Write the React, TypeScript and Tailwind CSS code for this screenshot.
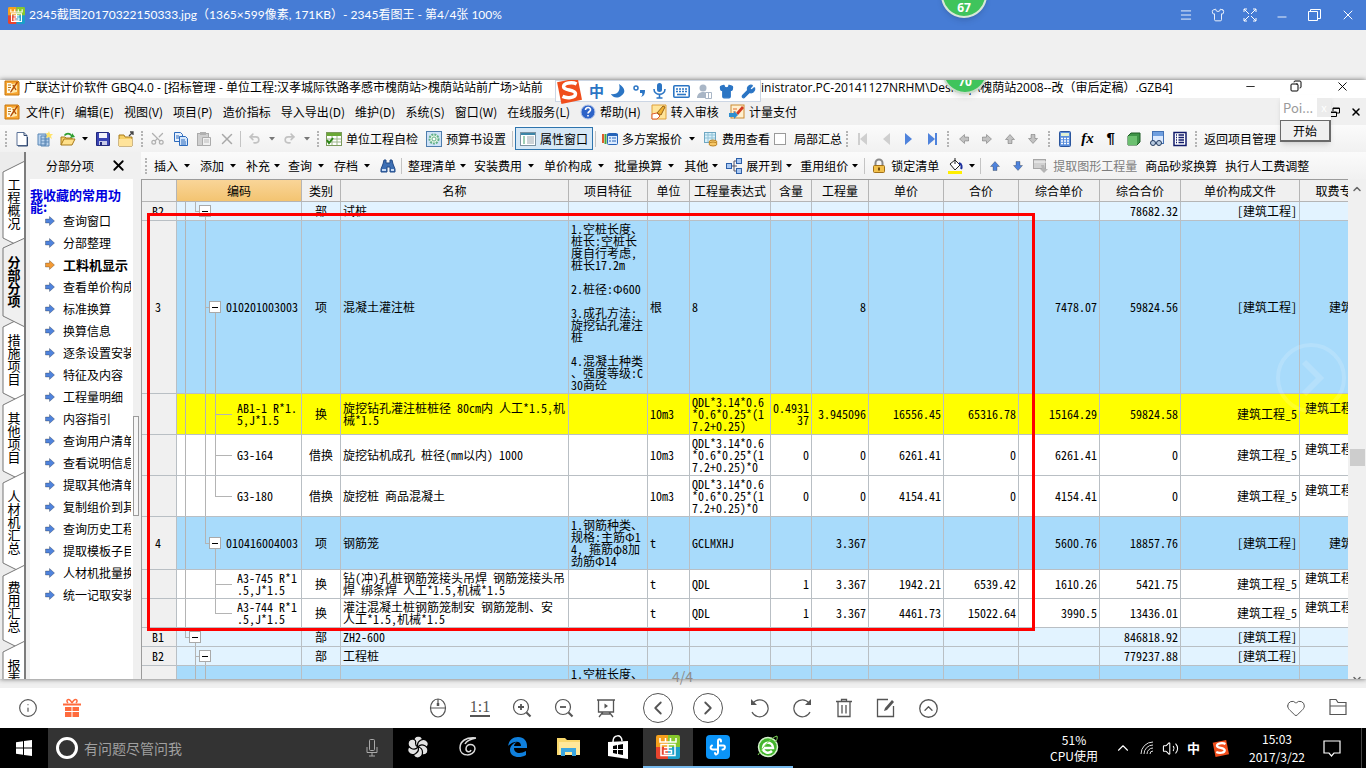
import React from 'react';
import { Menu, Shirt, Minus, Copy, X, Info, ChevronLeft, ChevronRight, CircleChevronUp, Heart, Wrench, ChevronUp, ChevronDown, Volume2, Scissors, Undo2, Redo2 } from 'lucide-react';

const Svg = ({ children }: { children: React.ReactNode }) => (
  <svg width="16" height="16" viewBox="0 0 16 16" fill="none" className="shrink-0">{children}</svg>
);

const GbqIcon = () => (
  <Svg>
    <path d="M1 1h13l1 1v13H1z" fill="#f7a531" stroke="#c8780f" />
    <path d="M3 3h4l1 1v9H3z" fill="#fffbe8" />
    <path d="M8 4l5-1v9l-5 1z" fill="#ffe9a8" />
    <path d="M4 5h3M4 7.500h3M4 10h2" stroke="#b3701a" />
    <path d="M13.500 2L8 10l-1.500 2.500M9 5l3 5" stroke="#b24d06" strokeWidth="1.400" />
  </Svg>
);

const PageIcon = () => (
  <Svg><path d="M3 1.500h7l3 3v10H3z" fill="#fff" stroke="#5a7197" /><path d="M10 1.500v3h3M13.500 6v9H4" stroke="#31486f" /></Svg>
);

const SheetsIcon = () => (
  <Svg><path d="M1 3h8v11H1zM4 5h8v10H4z" fill="#b9d3ee" stroke="#5b87b5" /><path d="M4 8h8M4 11h8M8 5v10" stroke="#5b87b5" /><path d="M12 0l1 3 3 0-2 2 1 3-3-2-3 1 1-3-1-2h2z" fill="#ffe36b" /></Svg>
);

const OpenIcon = () => (
  <Svg><path d="M1 14V6h4l1 1h6v2" fill="#f6d067" stroke="#a87a1a" /><path d="M1 14l3-6h11l-3 6z" fill="#ffe08a" stroke="#a87a1a" /><path d="M4 4c2-3 6-3 8 0V2l3 4-5 1 1-2c-2-2-4-2-6 0z" fill="#2f9e31" /></Svg>
);

const SaveIcon = () => (
  <Svg><path d="M1.500 1.500h12l1 1v12h-13z" fill="#3a44b4" stroke="#22297d" /><path d="M4 2h8v5H4z" fill="#f4f4fb" /><path d="M4 10h8v4H4z" fill="#c8cbe8" /><path d="M5 11h2v3H5z" fill="#22297d" /></Svg>
);

const FolderOutIcon = () => (
  <Svg><path d="M1 4h5l1 2h7v9H1z" fill="#f6d067" stroke="#a87a1a" /><path d="M1 8h13v7H1z" fill="#ffe39a" /><path d="M11 5l4-4M12 1h3v3" stroke="#444" strokeWidth="1.300" /></Svg>
);

const CopyDocsIcon = () => (
  <Svg><path d="M1.500 1.500h6l2 2v7h-8z" fill="#e8f1fd" stroke="#2d6bbd" /><path d="M6.500 5.500h6l2 2v7h-8z" fill="#d4e6fb" stroke="#2d6bbd" /><path d="M3 5h3M3 7h3M8 9h4M8 11h5M8 13h5" stroke="#2d6bbd" /></Svg>
);

const PasteIcon = () => (
  <Svg><rect x="1.500" y="2.500" width="11" height="12" fill="#cfcfcf" stroke="#ababab" /><rect x="4" y="1" width="6" height="3" fill="#b0b0b0" /><path d="M6.500 6.500h8v8h-8z" fill="#f0f0f0" stroke="#ababab" /><path d="M8 9h5M8 11h5" stroke="#bbb" /></Svg>
);

const CheckTableIcon = () => (
  <Svg><rect x=".5" y="1.500" width="15" height="13" fill="#fff" stroke="#7c9a5c" /><path d="M1 2h14v3H1z" fill="#6aa836" /><path d="M1 8h14M1 11h14M6 5v9M11 5v9" stroke="#9db58a" /><path d="M1 9l2 3 4-5" stroke="#2d8618" strokeWidth="2" /></Svg>
);

const GearIcon = () => (
  <Svg><rect x=".5" y=".5" width="15" height="15" fill="#cfe3f7" stroke="#4e7dad" /><circle cx="8" cy="8" r="4.500" fill="#e7f6e4" stroke="#62b08a" strokeWidth="2" strokeDasharray="2 1" /><circle cx="8" cy="8" r="2" fill="#fff" stroke="#62b08a" /></Svg>
);

const ListWindowIcon = () => (
  <Svg><rect x=".5" y="1.500" width="15" height="13" fill="#fff" stroke="#7c93a3" /><path d="M1 2h14v2H1z" fill="#3c86a8" /><path d="M3 6h2M3 8h2M3 10h2M3 12h2" stroke="#3aa06a" /><path d="M7 6h7M7 8h7M7 10h7M7 12h7" stroke="#9aa7b0" /></Svg>
);

const StackIcon = () => (
  <Svg><path d="M1 3v9" stroke="#e05a2b" strokeWidth="2" /><path d="M3.500 3v10" stroke="#4aa53c" strokeWidth="2" /><rect x="5.500" y="2.500" width="10" height="11" rx="1" fill="#dcebff" stroke="#2764b8" /><path d="M5 3h11v2H5z" fill="#2764b8" /><path d="M7 7h2M10 7h4M7 10h2M10 10h4" stroke="#2764b8" /></Svg>
);

const CostIcon = () => (
  <Svg><rect x="2.500" y="1.500" width="11" height="10" fill="#d9f0fa" stroke="#6fa7c2" /><path d="M3 4h10M3 7h10M6 2v9M10 2v9" stroke="#8fc2d8" /><ellipse cx="11" cy="11" rx="4" ry="2" fill="#f5c666" stroke="#bd8526" /><ellipse cx="11" cy="13" rx="4" ry="2" fill="#f5c666" stroke="#bd8526" /></Svg>
);

const HelpIcon = () => (
  <Svg><circle cx="8" cy="8" r="7" fill="#2d63c8" stroke="#b8c8e8" /><path d="M5.500 6c0-3.500 5.500-3 5 0 0 1.500-2.500 1.500-2.500 3.500M8 11v1.500" stroke="#fff" strokeWidth="1.600" /></Svg>
);

const AuditIcon = () => (
  <Svg><path d="M1 1h14v14H1z" fill="#ffe59a" stroke="#dfa03a" /><path d="M1 10l5-1 3 3-3 3H1z" fill="#fff" stroke="#e05a2b" /><path d="M6 9l6-7 2 1-4 8z" fill="#f2b233" stroke="#97631a" /></Svg>
);

const PayIcon = () => (
  <Svg><rect x="2" y="1" width="13" height="13" fill="#fff0cf" stroke="#cc8a30" /><path d="M4 5h4M4 8h3" stroke="#e06a2b" /><path d="M7 9l6-7 2 2-6 7z" fill="#d43a22" /><path d="M0 9h5V7l4 4-4 4v-2H0z" fill="#2f8fd0" /></Svg>
);

const BinocularsIcon = () => (
  <Svg><path d="M4 2h2v3h4V2h2l1 4 2 5v3h-5V9H7v5H1v-3l2-5z" fill="#3d6fb4" stroke="#234a86" /><path d="M2 12h4M11 12h3" stroke="#c7dbf5" strokeWidth="2" /></Svg>
);

const ExpandTreeIcon = () => (
  <Svg><path d="M5 8h3M8 3v10M8 3h3M8 13h3M8 8h3" stroke="#556" /><rect x=".5" y="5.500" width="5" height="5" fill="#a9c8f2" stroke="#2d5fa8" /><rect x="10.500" y=".5" width="5" height="5" fill="#a9c8f2" stroke="#2d5fa8" /><rect x="10.500" y="10.500" width="5" height="5" fill="#a9c8f2" stroke="#2d5fa8" /></Svg>
);

const LockIcon = () => (
  <Svg><path d="M4.500 8V5a3.500 3.500 0 017 0v3" stroke="#8a8a8a" strokeWidth="2" /><rect x="2.500" y="7.500" width="11" height="7" rx="1" fill="#f2c14c" stroke="#a0701a" /><path d="M8 9.500v3" stroke="#7a4f08" strokeWidth="2" /></Svg>
);

const BucketIcon = () => (
  <Svg><path d="M3 6l5-4 5 5-5 5z" fill="#fff" stroke="#222" /><path d="M8 6V0" stroke="#222" /><path d="M12 5c3 1 3 4 2 6" stroke="#1b2f9c" strokeWidth="2" /><path d="M1 13h14v3H1z" fill="#ffef00" /></Svg>
);

const ExtractIcon = () => (
  <Svg><rect x=".5" y="1.500" width="12" height="9" fill="#d0d0d0" stroke="#a6a6a6" /><path d="M1 4h12" stroke="#f5f5f5" /><path d="M8 7h3l1 4h3l-4 4-4-4h2z" fill="#b5b5b5" /></Svg>
);

const ArrowIcon = ({ dir, color }: { dir: 'left' | 'right' | 'up' | 'down', color: string }) => {
  const turns = { right: 0, down: 90, left: 180, up: 270 };
  return (
    <Svg>
      <g transform={`rotate(${turns[dir]} 8 8)`}>
        <path d="M3.500 6h4V3.500L12.500 8l-5 4.500V10h-4z" fill={color} stroke="#00000040" />
      </g>
    </Svg>
  );
};

const PlayIcon = ({ flip, bar, color }: { flip?: boolean, bar?: boolean, color: string }) => (
  <Svg>
    <g transform={flip ? 'rotate(180 8 8)' : undefined}>
      <path d="M4 2l7 6-7 6z" fill={color} />
      {bar && <path d="M12 2v12" stroke={color} strokeWidth="2" />}
    </g>
  </Svg>
);

const CalcIcon = () => (
  <Svg><rect x="2.500" y=".5" width="11" height="15" rx="1" fill="#5b8fdc" stroke="#2a559c" /><path d="M4 2h8v3H4z" fill="#e2f0d2" /><path d="M4 7.500h8M4 10h8M4 12.500h8" stroke="#fff" strokeWidth="1.500" strokeDasharray="2 1" /></Svg>
);

const CubeIcon = () => (
  <Svg><path d="M2 5l3-3h9v9l-3 3H2z" fill="#3f9448" stroke="#1f5c27" /><path d="M2 5h9v9H2z" fill="#6cc070" /></Svg>
);

const FindDocIcon = () => (
  <Svg><rect x="3.500" y=".5" width="11" height="12" fill="#dceaff" stroke="#4472b4" /><path d="M4 1h10v4H4z" fill="#6f9fe0" /><circle cx="4" cy="12" r="2.500" fill="#b9cbe0" stroke="#223a5e" /><circle cx="10" cy="12" r="2.500" fill="#b9cbe0" stroke="#223a5e" /></Svg>
);

const ReportIcon = () => (
  <Svg><rect x="2" y="1.500" width="12" height="13" fill="#fff" stroke="#111a6a" strokeWidth="1.500" /><path d="M4 4h1M4 6.500h1M4 9h1M4 11.500h1M6.500 4H12M6.500 6.500H12M6.500 9H12M6.500 11.500H12" stroke="#111a6a" strokeWidth="1.300" /></Svg>
);

const ViewerLogo = ({ size }: { size: number }) => (
  <svg width={size} height={size} viewBox="0 0 24 24" fill="none" className="shrink-0">
    <path d="M2 0h10v12H0V2a2 2 0 012-2z" fill="#f5a01c" />
    <path d="M12 0h10a2 2 0 012 2v10H12z" fill="#86c82c" />
    <path d="M0 12h12v12H2a2 2 0 01-2-2z" fill="#e8442e" />
    <path d="M12 12h12v10a2 2 0 01-2 2H12z" fill="#1b9fc9" />
    <path d="M4 3v4h16V3M9.500 3v4M14.500 3v4M5 9.500h14v11H5zM8 12.500h8M12 10v5M8.500 15.500h7v3h-7z" stroke="#fff" strokeWidth="1.500" />
  </svg>
);

const SogouLogo = ({ size }: { size: number }) => (
  <svg width={size} height={size} viewBox="0 0 24 24" fill="none" className="shrink-0">
    <path d="M1 4l19-4 4 20-19 4z" fill="#f04e1c" />
    <path d="M19 5.500c-4-2-12-1-12 2.500 0 4 11 2 11 6.500 0 4-8 4.500-12 2.500" stroke="#fff" strokeWidth="3.200" />
  </svg>
);

const Caret = ({ color = '#000' }: { color?: string }) => (
  <svg width="6" height="4" viewBox="0 0 6 4"><path d="M0 0h6L3 3.500z" fill={color} /></svg>
);

const Grip = () => (
  <span className="flex w-[9px] shrink-0 justify-center"><span className="h-4 border-l-2 border-dotted border-[#b4b4b4]" /></span>
);

const Sep = () => (
  <span className="flex w-[5px] shrink-0 justify-center"><span className="h-4 w-px bg-[#c4c4c4]" /></span>
);

const IconTool = ({ label, children }: { label: string, children: React.ReactNode }) => (
  <button aria-label={label} className="flex h-6 w-[23px] shrink-0 items-center justify-center">{children}</button>
);

const CaretTool = ({ label, color }: { label: string, color?: string }) => (
  <button aria-label={label} className="flex h-6 w-3 shrink-0 items-center justify-center"><Caret color={color} /></button>
);

const TextTool = ({ icon, children, className = '' }: { icon?: React.ReactNode, children: React.ReactNode, className?: string }) => (
  <button className={`flex h-[23px] shrink-0 items-center gap-1 px-1 ${className}`}>{icon}{children}</button>
);

const DropTool = ({ icon, tight, children }: { icon?: React.ReactNode, tight?: boolean, children: React.ReactNode }) => (
  <button className="flex h-6 shrink-0 items-center pl-1">
    {icon && <span className="mr-1">{icon}</span>}
    {children}
    <span className={`flex justify-center ${tight ? 'w-[14px]' : 'w-[18px]'}`}><Caret /></span>
  </button>
);

const ViewerTitle = () => (
  <header className="relative flex h-[30px] shrink-0 items-center bg-[#467cd5] pl-2 text-white">
    <ViewerLogo size={17} />
    <h1 className="ml-1 flex-1 whitespace-nowrap font-['Lato','Noto_Sans_CJK_SC',sans-serif] text-[12px]">2345截图20170322150333.jpg（1365×599像素, 171KB）- 2345看图王 - 第4/4张 100%</h1>
    <button aria-label="菜单" className="flex w-8 justify-center"><Menu size={14} strokeWidth={1.500} /></button>
    <button aria-label="皮肤" className="flex w-8 justify-center"><Shirt size={14} strokeWidth={1.500} /></button>
    <button aria-label="全屏" className="flex w-8 justify-center">
      <svg width="14" height="14" viewBox="0 0 14 14" fill="none" stroke="#fff"><path d="M1 4V1h3M10 1h3v3M13 10v3h-3M4 13H1v-3M1 1l5 5M13 1L8 6M13 13L8 8M1 13l5-5" /></svg>
    </button>
    <button aria-label="最小化" className="flex w-8 justify-center pt-1"><Minus size={14} strokeWidth={1.500} /></button>
    <button aria-label="还原" className="flex w-8 justify-center">
      <svg width="13" height="12" viewBox="0 0 13 12" fill="none" stroke="#fff"><path d="M.5 2.500h9v9h-9zM2.500 2.500v-2h10v9h-3" /></svg>
    </button>
    <button aria-label="关闭" className="flex w-9 justify-center"><X size={16} strokeWidth={1.500} /></button>
    <div className="absolute -top-7 left-[941px] flex size-[46px] items-end justify-center rounded-full border-2 border-[#d8e8d8] bg-[#3fc45c] pb-0.5 font-['Open_Sans',sans-serif] text-[12px] font-bold leading-3 text-white shadow-md">67</div>
  </header>
);

const ImeBar = () => (
  <div className="absolute left-[555px] top-0 flex h-[22px] w-[206px] items-center justify-between border border-[#ccd6e4] bg-white pr-1 text-[#2b75c4]">
    <SogouLogo size={26} />
    <span className="text-[15px] font-bold">中</span>
    <svg width="14" height="14" viewBox="0 0 14 14"><path d="M8 0c5 3 8 8 2 12-4 3-9 1-10-2 6 1 10-3 8-10z" fill="#2b75c4" /></svg>
    <svg width="14" height="14" viewBox="0 0 14 14" fill="none"><circle cx="4" cy="4" r="2" stroke="#2b75c4" strokeWidth="1.500" /><path d="M8 6h5c0 4-1 6-4 7 1-1 2-3 1-4H8z" fill="#2b75c4" /></svg>
    <svg width="13" height="16" viewBox="0 0 13 16" fill="none"><rect x="4" y="0" width="5" height="9" rx="2.500" fill="#2b75c4" /><path d="M1 6c0 7 11 7 11 0M6.500 11v4M3.500 15h6" stroke="#2b75c4" strokeWidth="1.600" /></svg>
    <svg width="17" height="13" viewBox="0 0 17 13" fill="none"><rect x=".8" y=".8" width="15.400" height="11.400" rx="1" stroke="#2b75c4" strokeWidth="1.600" /><path d="M3 4h11M3 6.500h11" stroke="#2b75c4" strokeWidth="1.600" strokeDasharray="2 1" /><path d="M4 9.500h9" stroke="#2b75c4" strokeWidth="1.600" /></svg>
    <svg width="15" height="15" viewBox="0 0 15 15"><circle cx="6" cy="4" r="3.500" fill="#a9b6c6" /><path d="M0 14c0-8 12-8 12 0z" fill="#a9b6c6" /><path d="M8.500 8.500h6v6h-6z" fill="#fff" stroke="#a9b6c6" /><path d="M11.500 9v5" stroke="#a9b6c6" /></svg>
    <Shirt size={15} fill="#2b75c4" />
    <Wrench size={15} fill="#2b75c4" />
  </div>
);

const AppTitle = () => (
  <div className="flex h-[18px] shrink-0 items-start overflow-hidden bg-white pl-1 font-['Open_Sans','Noto_Sans_CJK_SC',sans-serif] leading-4">
    <GbqIcon />
    <span className="ml-1 w-[532px] shrink-0 overflow-hidden whitespace-nowrap">广联达计价软件 GBQ4.0 - [招标管理 - 单位工程:汉孝城际铁路孝感市槐荫站&gt;槐荫站站前广场&gt;站前</span>
    <span className="flex-1 whitespace-nowrap pl-[205px]">inistrator.PC-20141127NRHM\Desktop\槐荫站2008--改（审后定稿）.GZB4]</span>
    <button aria-label="最小化窗口" className="flex h-3 w-[45px] items-center justify-center"><Minus size={13} strokeWidth={1.500} /></button>
    <button aria-label="还原窗口" className="flex h-3 w-[45px] items-center justify-center"><Copy size={12} strokeWidth={2} className="-scale-x-100" /></button>
    <button aria-label="关闭窗口" className="flex h-3 w-12 items-center justify-center"><X size={15} strokeWidth={1.500} /></button>
  </div>
);

const menus = ['文件(F)', '编辑(E)', '视图(V)', '项目(P)', '造价指标', '导入导出(D)', '维护(D)', '系统(S)', '窗口(W)', '在线服务(L)'];

const MenuBar = () => (
  <nav className="flex h-[27px] shrink-0 items-center gap-[10px] whitespace-nowrap bg-[#f0f0f0] px-1">
    <span className="flex items-center gap-1.5"><GbqIcon /><button>{menus[0]}</button></span>
    {menus.slice(1).map(m => <button key={m}>{m}</button>)}
    <button className="flex items-center gap-1"><HelpIcon />帮助(H)</button>
    <button className="flex items-center gap-1"><AuditIcon />转入审核</button>
    <button className="flex items-center gap-1"><PayIcon />计量支付</button>
    <span className="flex-1" />
    <button aria-label="还原文档">
      <svg width="10" height="10" viewBox="0 0 10 10" fill="none" stroke="#000"><path d="M.5 5h6v4.500h-6zM3 4V1h6.500v5H7M3 1.500h7M0 5.500h7" /></svg>
    </button>
    <button aria-label="关闭文档"><X size={12} strokeWidth={3} /></button>
  </nav>
);

const grey = '#c2c2c2';
const blue = '#4f83dc';

const MainToolbar = () => (
  <div className="flex h-[27px] shrink-0 items-center whitespace-nowrap bg-linear-to-b from-[#fbfbfb] to-[#f1f1f1] pl-px">
    <Grip />
    <IconTool label="新建"><PageIcon /></IconTool>
    <IconTool label="新建项目"><SheetsIcon /></IconTool>
    <IconTool label="打开"><OpenIcon /></IconTool>
    <CaretTool label="最近文件" />
    <IconTool label="保存"><SaveIcon /></IconTool>
    <IconTool label="另存"><FolderOutIcon /></IconTool>
    <Grip />
    <IconTool label="剪切"><Scissors size={15} color="#b0b0b0" className="-rotate-90" /></IconTool>
    <IconTool label="复制"><CopyDocsIcon /></IconTool>
    <IconTool label="粘贴"><PasteIcon /></IconTool>
    <IconTool label="删除"><X size={18} color="#a8a8a8" /></IconTool>
    <Sep />
    <IconTool label="撤销"><Undo2 size={13} color={grey} strokeWidth={3} /></IconTool>
    <CaretTool label="撤销列表" color="#777" />
    <IconTool label="重做"><Redo2 size={13} color={grey} strokeWidth={3} /></IconTool>
    <CaretTool label="重做列表" color="#777" />
    <Grip />
    <TextTool icon={<CheckTableIcon />}>单位工程自检</TextTool>
    <TextTool icon={<GearIcon />}>预算书设置</TextTool>
    <Sep />
    <TextTool icon={<ListWindowIcon />} className="border border-[#2e74ad] bg-[#d6e8f6]">属性窗口</TextTool>
    <Sep />
    <TextTool icon={<StackIcon />}>多方案报价</TextTool>
    <CaretTool label="报价方案" />
    <TextTool icon={<CostIcon />}>费用查看</TextTool>
    <label className="flex shrink-0 items-center gap-2"><input type="checkbox" className="size-3 appearance-none border border-[#9a9a9a] bg-white" />局部汇总</label>
    <Grip />
    <IconTool label="首条"><PlayIcon flip bar color="#cfcfcf" /></IconTool>
    <IconTool label="上一条"><PlayIcon flip color="#cfcfcf" /></IconTool>
    <IconTool label="下一条"><PlayIcon color={blue} /></IconTool>
    <IconTool label="末条"><PlayIcon bar color={blue} /></IconTool>
    <Grip />
    <IconTool label="左移"><ArrowIcon dir="left" color={grey} /></IconTool>
    <IconTool label="右移"><ArrowIcon dir="right" color={grey} /></IconTool>
    <IconTool label="上移"><ArrowIcon dir="up" color={grey} /></IconTool>
    <IconTool label="下移"><ArrowIcon dir="down" color={grey} /></IconTool>
    <Grip />
    <IconTool label="计算器"><CalcIcon /></IconTool>
    <IconTool label="函数"><span className="font-['Liberation_Serif',serif] text-[15px] font-bold italic">fx</span></IconTool>
    <IconTool label="段落"><span className="font-['Liberation_Sans',sans-serif] text-[15px] font-bold">¶</span></IconTool>
    <IconTool label="图元"><CubeIcon /></IconTool>
    <IconTool label="查找文档"><FindDocIcon /></IconTool>
    <IconTool label="报表预览"><ReportIcon /></IconTool>
    <Grip />
    <TextTool>返回项目管理</TextTool>
  </div>
);

const EditToolbar = () => (
  <div className="flex h-[27px] shrink-0 items-center whitespace-nowrap bg-linear-to-b from-[#fbfbfb] to-[#f1f1f1]">
    <Grip />
    <DropTool>插入</DropTool>
    <DropTool>添加</DropTool>
    <DropTool tight>补充</DropTool>
    <DropTool>查询</DropTool>
    <DropTool>存档</DropTool>
    <IconTool label="查找"><BinocularsIcon /></IconTool>
    <Sep />
    <DropTool tight>整理清单</DropTool>
    <DropTool>安装费用</DropTool>
    <DropTool>单价构成</DropTool>
    <DropTool>批量换算</DropTool>
    <DropTool tight>其他</DropTool>
    <DropTool tight icon={<ExpandTreeIcon />}>展开到</DropTool>
    <DropTool tight>重用组价</DropTool>
    <Sep />
    <TextTool icon={<LockIcon />}>锁定清单</TextTool>
    <IconTool label="填充颜色"><BucketIcon /></IconTool>
    <CaretTool label="更多颜色" />
    <Sep />
    <IconTool label="上移一行"><ArrowIcon dir="up" color={blue} /></IconTool>
    <IconTool label="下移一行"><ArrowIcon dir="down" color={blue} /></IconTool>
    <TextTool icon={<ExtractIcon />} className="text-[#7d7d7d]">提取图形工程量</TextTool>
    <TextTool>商品砂浆换算</TextTool>
    <TextTool>执行人工费调整</TextTool>
  </div>
);

const stages = ['工程概况', '分部分项', '措施项目', '其他项目', '人材机汇总', '费用汇总', '报表'];

const StageTabs = () => (
  <div className="relative w-[26px] shrink-0 overflow-hidden border-r-2 border-[#7d7d7d] bg-[#ececec] pt-3">
    <svg width="25" height="530" viewBox="0 0 25 530" className="absolute left-0 top-0">
      {[[20, 86], [175, 241], [253, 319], [331, 411], [424, 488], [500, 600]].map(([a, b]) => (
        <path key={a} d={`M25 ${a - 11}L3 ${a}V${b}L25 ${b + 11}`} fill="#fff" stroke="#777" />
      ))}
      <path d="M25 86L3 96V164L25 175" fill="#f0f0f0" stroke="#777" />
    </svg>
    <div className="relative flex flex-col">
      {stages.map(s => (
        <button
          key={s}
          className={`flex items-center justify-center pl-1 ${s.length === 5 ? 'h-[91px]' : s.length === 2 ? 'h-[52px]' : 'h-[78px]'} ${s === '分部分项' ? 'font-bold' : ''}`}
        >
          <span className="w-[13px] break-all text-[13px] leading-[13px]">{s}</span>
        </button>
      ))}
    </div>
  </div>
);

const favourites = ['查询窗口', '分部整理', '工料机显示', '查看单价构成', '标准换算', '换算信息', '逐条设置安装费用', '特征及内容', '工程量明细', '内容指引', '查询用户清单', '查看说明信息', '提取其他清单', '复制组价到其他', '查询历史工程', '提取模板子目', '人材机批量换算', '统一记取安装费用'];

const SidePanel = () => (
  <aside className="flex w-[107px] shrink-0 flex-col bg-[#f0f0f0] pl-1">
    <div className="flex h-[27px] shrink-0 items-center justify-between pl-4 pr-1.5">
      <h2>分部分项</h2>
      <button aria-label="关闭面板"><X size={17} strokeWidth={2.500} /></button>
    </div>
    <div className="flex-1 overflow-hidden bg-white">
      <h3 className="h-[31px] pt-[10px] text-[13px] font-bold leading-3 text-[#0000e0]">我收藏的常用功能:</h3>
      <ul className="mr-0.5 overflow-hidden">
        {favourites.map(f => (
          <li key={f}>
            <a href="#" className={`flex h-[22px] items-center gap-[5px] whitespace-nowrap pl-3 ${f === '工料机显示' ? 'text-[13px] font-bold' : ''}`}>
              <ArrowIcon dir="right" color={f === '工料机显示' ? '#f39a35' : blue} />{f}
            </a>
          </li>
        ))}
      </ul>
    </div>
  </aside>
);

type Tone = 'light' | 'blue' | 'yellow' | 'white';

interface BillRow {
  no?: string;
  tone: Tone;
  height: string;
  guides: number[];
  end?: number;
  box?: 18 | 28 | 38;
  code?: string;
  kind: string;
  name?: string;
  feature?: string;
  unit?: string;
  expr?: string;
  rate?: string;
  qty?: string;
  price?: string;
  total?: string;
  unitPrice?: string;
  sum?: string;
  file: string;
  major?: string;
}

const pileFeature = '1.空桩长度、\n桩长:空桩长\n度自行考虑,\n桩长17.2m\n\n2.桩径:Φ600\n\n3.成孔方法:\n旋挖钻孔灌注\n桩\n\n4.混凝土种类\n、强度等级:C\n30商砼';
const steelFeature = '1.钢筋种类、\n规格:主筋Φ1\n4, 箍筋φ8加\n劲筋Φ14';

const rows: BillRow[] = [
  { no: 'B2', tone: 'light', height: 'h-[19px]', guides: [8], end: 18, box: 28, kind: '部', name: '试桩', sum: '78682.32', file: '[建筑工程]' },
  { no: '3', tone: 'blue', height: 'h-[173px]', guides: [8, 28], box: 38, code: '010201003003', kind: '项', name: '混凝土灌注桩', feature: pileFeature, unit: '根', expr: '8', qty: '8', unitPrice: '7478.07', sum: '59824.56', file: '[建筑工程]', major: '建筑工程' },
  { tone: 'yellow', height: 'h-[41px]', guides: [8, 28, 38], code: 'AB1-1 R*1.\n5,J*1.5', kind: '换', name: '旋挖钻孔灌注桩桩径 80cm内 人工*1.5,机\n械*1.5', unit: '10m3', expr: 'QDL*3.14*0.6\n*0.6*0.25*(1\n7.2+0.25)', rate: '0.4931\n37', qty: '3.945096', price: '16556.45', total: '65316.78', unitPrice: '15164.29', sum: '59824.58', file: '建筑工程_5', major: '建筑工程土建\n类' },
  { tone: 'white', height: 'h-[41px]', guides: [8, 28, 38], code: 'G3-164', kind: '借换', name: '旋挖钻机成孔 桩径(mm以内) 1000', unit: '10m3', expr: 'QDL*3.14*0.6\n*0.6*0.25*(1\n7.2+0.25)*0', rate: '0', qty: '0', price: '6261.41', total: '0', unitPrice: '6261.41', sum: '0', file: '建筑工程_5', major: '建筑工程土建\n类' },
  { tone: 'white', height: 'h-[41px]', guides: [8, 28], end: 38, code: 'G3-180', kind: '借换', name: '旋挖桩 商品混凝土', unit: '10m3', expr: 'QDL*3.14*0.6\n*0.6*0.25*(1\n7.2+0.25)*0', rate: '0', qty: '0', price: '4154.41', total: '0', unitPrice: '4154.41', sum: '0', file: '建筑工程_5', major: '建筑工程土建\n类' },
  { no: '4', tone: 'blue', height: 'h-[53px]', guides: [8], end: 28, box: 38, code: '010416004003', kind: '项', name: '钢筋笼', feature: steelFeature, unit: 't', expr: 'GCLMXHJ', qty: '3.367', unitPrice: '5600.76', sum: '18857.76', file: '[建筑工程]', major: '建筑工程' },
  { tone: 'white', height: 'h-[29px]', guides: [8, 38], code: 'A3-745 R*1\n.5,J*1.5', kind: '换', name: '钻(冲)孔桩钢筋笼接头吊焊 钢筋笼接头吊\n焊 绑条焊 人工*1.5,机械*1.5', unit: 't', expr: 'QDL', rate: '1', qty: '3.367', price: '1942.21', total: '6539.42', unitPrice: '1610.26', sum: '5421.75', file: '建筑工程_5', major: '建筑工程土建\n类' },
  { tone: 'white', height: 'h-[29px]', guides: [8], end: 38, code: 'A3-744 R*1\n.5,J*1.5', kind: '换', name: '灌注混凝土桩钢筋笼制安 钢筋笼制、安\n人工*1.5,机械*1.5', unit: 't', expr: 'QDL', rate: '1', qty: '3.367', price: '4461.73', total: '15022.64', unitPrice: '3990.5', sum: '13436.01', file: '建筑工程_5', major: '建筑工程土建\n类' },
  { no: 'B1', tone: 'light', height: 'h-[19px]', guides: [], end: 8, box: 18, kind: '部', name: 'ZH2-600', sum: '846818.92', file: '[建筑工程]' },
  { no: 'B2', tone: 'light', height: 'h-[19px]', guides: [18], box: 28, kind: '部', name: '工程桩', sum: '779237.88', file: '[建筑工程]' },
  { no: '5', tone: 'blue', height: 'h-[173px]', guides: [18, 28], box: 38, code: '010201003004', kind: '项', name: '混凝土灌注桩', feature: pileFeature, unit: '根', file: '[建筑工程]' },
];

const tones: Record<Tone, string> = {
  light: 'bg-[#e2f3ff]',
  blue: 'bg-[#a8dbfb]',
  yellow: 'bg-[#ffff00]',
  white: 'bg-white',
};

const boxPad = { 18: 'pl-3', 28: 'pl-[22px]', 38: 'pl-8' };

const CodeCell = ({ row }: { row: BillRow }) => {
  const from = row.end ?? row.guides[row.guides.length - 1];
  return (
    <td className="relative border-b border-r border-[#b9bfc4]">
      <svg className="absolute inset-0 h-full w-full" stroke="#b4b4b4" shapeRendering="crispEdges">
        {row.guides.map(x => <line key={x} x1={x} x2={x} y1="0" y2="100%" />)}
        {row.end && <line x1={row.end} x2={row.end} y1="0" y2="50%" />}
        <line x1={from} x2={row.box ?? 55} y1="50%" y2="50%" />
        {row.box && <line x1={row.box} x2={row.box} y1="50%" y2="100%" />}
      </svg>
      <div className={`relative flex items-center gap-[5px] ${row.box ? boxPad[row.box] : 'pl-[60px]'}`}>
        {row.box && (
          <button aria-label="折叠" className="flex size-3 shrink-0 items-center justify-center border border-[#a9a9a9] bg-white">
            <span className="h-px w-1.5 bg-black" />
          </button>
        )}
        <span>{row.code}</span>
      </div>
    </td>
  );
};

const columns: [string, string][] = [
  ['', 'w-[35px]'],
  ['编码', 'w-[125px]'],
  ['类别', 'w-[39px]'],
  ['名称', 'w-[228px]'],
  ['项目特征', 'w-[79px]'],
  ['单位', 'w-[42px]'],
  ['工程量表达式', 'w-[81px]'],
  ['含量', 'w-[41px]'],
  ['工程量', 'w-[57px]'],
  ['单价', 'w-[75px]'],
  ['合价', 'w-[75px]'],
  ['综合单价', 'w-[81px]'],
  ['综合合价', 'w-[81px]'],
  ['单价构成文件', 'w-[119px]'],
  ['取费专业', 'w-[80px]'],
];

const Cell = ({ align = 'text-left', children }: { align?: string, children?: React.ReactNode }) => (
  <td className={`border-b border-r border-[#b9bfc4] px-0.5 ${align}`}>{children}</td>
);

const BillTable = () => (
  <div className="relative min-w-0 flex-1 overflow-hidden border-l border-t border-[#9b9b9b] bg-white">
    <table className="w-[1238px] table-fixed border-separate border-spacing-0 whitespace-pre font-['Noto_Sans_Mono_CJK_SC','Noto_Sans_CJK_SC',monospace] text-[12px] leading-3">
      <thead>
        <tr className="h-[22px]">
          {columns.map(([label, width], i) => (
            <th key={i} className={`border-b border-r border-[#b5b5b5] p-0 font-normal ${width} ${label === '编码' ? 'bg-linear-to-b from-[#f9d598] to-[#f3c471]' : 'bg-[#f0f0f0]'}`}>{label}</th>
          ))}
        </tr>
      </thead>
      <tbody>
        {rows.map((r, i) => (
          <tr key={i} className={`${r.height} ${tones[r.tone]}`}>
            <td className="border-b border-r border-[#b9bfc4] bg-[#f0f0f0] p-0 pr-0.5 text-center">{r.no}</td>
            <CodeCell row={r} />
            <Cell align="text-center">{r.kind}</Cell>
            <Cell>{r.name}</Cell>
            <Cell>{r.feature}</Cell>
            <Cell>{r.unit}</Cell>
            <Cell>{r.expr}</Cell>
            <Cell align="text-right">{r.rate}</Cell>
            <Cell align="text-right">{r.qty}</Cell>
            <Cell align="text-right">{r.price}</Cell>
            <Cell align="text-right">{r.total}</Cell>
            <Cell align="text-right">{r.unitPrice}</Cell>
            <Cell align="text-right">{r.sum}</Cell>
            <Cell align="text-right">{r.file}</Cell>
            <Cell align="text-right">{r.major}</Cell>
          </tr>
        ))}
      </tbody>
    </table>
    {/* reviewer's red frame */}
    <div className="pointer-events-none absolute left-[5px] top-[33px] h-[418px] w-[888px] border-[3px] border-[#ff0000]" />
  </div>
);

const ScrollBar = () => (
  <div className="flex w-[18px] shrink-0 flex-col items-center bg-[#f0f0f0]">
    <ChevronUp size={12} strokeWidth={3} color="#666" className="mt-1" />
    <span className="flex-[255]" />
    <span className="h-[17px] w-[15px] bg-[#cdcdcd]" />
    <span className="flex-[208]" />
    <ChevronDown size={12} strokeWidth={3} color="#666" className="-mb-1.5" />
  </div>
);

const Picture = () => (
  <section className="relative mt-[50px] flex min-h-0 flex-1 flex-col bg-[#f0f0f0] text-black shadow-[0_0_5px_#666]">
    <div className="relative flex min-h-0 flex-1 flex-col overflow-hidden">
      <AppTitle />
      <MenuBar />
      <MainToolbar />
      <div className="flex min-h-0 flex-1">
        <StageTabs />
        <SidePanel />
        <div className="flex w-2 shrink-0 flex-col justify-center pt-[100px]">
          <span className="h-[100px] w-1.5 border border-[#9b9b9b] bg-[#f6f6f6]" />
        </div>
        <div className="flex min-w-0 flex-1 flex-col">
          <EditToolbar />
          <div className="flex min-h-0 flex-1">
            <BillTable />
            <ScrollBar />
          </div>
        </div>
      </div>
      <ImeBar />
      <div className="absolute -top-8 left-[942px] flex size-[46px] items-end justify-center rounded-full border-2 border-[#c9dcc9] bg-[#3fc45c] pb-1 font-['Open_Sans',sans-serif] text-[12px] font-bold leading-3 text-white shadow-md">70</div>
    </div>
    <div className="absolute right-[35px] top-[15px] w-[51px] shadow-md">
      <div className="flex h-[25px] items-center gap-1 bg-white pl-[3px] text-[13px] text-[#9a9a9a]">Poi...<button aria-label="关闭 Poi" className="h-[19px] flex-1 bg-[#ececec] text-[11px] text-white">x</button></div>
      <button className="h-[22px] w-full border border-b-2 border-r-2 border-[#6a6a6a] bg-[#f0f0f0] text-[12px] leading-none">开始</button>
    </div>
    <svg width="72" height="72" viewBox="0 0 72 72" fill="none" stroke="#fff" strokeOpacity=".15" strokeWidth="4" className="absolute right-[19px] top-[262px]">
      <circle cx="36" cy="36" r="33" /><path d="M29 20l16 16-16 16" strokeWidth="6" />
    </svg>
    <span className="absolute -bottom-2 left-1/2 -ml-[11px] text-[14px] text-[#8d8d8d]">4/4</span>
  </section>
);

const ViewTool = ({ label, children }: { label: string, children: React.ReactNode }) => (
  <button aria-label={label} className="flex w-[42px] justify-center">{children}</button>
);

const ViewerBar = () => (
  <footer className="grid h-10 shrink-0 grid-cols-[1fr_auto_1fr] items-center bg-white text-[#555]">
    <div className="flex gap-[2px] pl-[7px]">
      <ViewTool label="信息"><Info size={20} strokeWidth={1.400} /></ViewTool>
      <ViewTool label="礼物">
        <svg width="20" height="20" viewBox="0 0 20 20" fill="none"><path d="M1 5.500h18v2H1zM3 9h6.500v4H3zM10.500 9H17v4h-6.500zM3 14h6.500v5H3zM10.500 14H17v5h-6.500z" fill="#ff6b3d" /><path d="M10 5C7-1 3 2 6 5M10 5c3-6 7-3 4 0" stroke="#ff6b3d" strokeWidth="1.500" /></svg>
      </ViewTool>
    </div>
    <div className="flex items-center">
      <ViewTool label="鼠标模式">
        <svg width="18" height="20" viewBox="0 0 18 20" fill="none" stroke="#555" strokeWidth="1.200"><ellipse cx="9" cy="10" rx="7.500" ry="9" /><path d="M1.500 10h15M9 1v5" /><path d="M9 5v3" strokeWidth="2.500" /></svg>
      </ViewTool>
      <button className="flex w-[42px] justify-center"><span className="border-b-2 border-[#555] font-['Liberation_Serif',serif] text-[16px] leading-4">1:1</span></button>
      <ViewTool label="放大">
        <svg width="20" height="20" viewBox="0 0 20 20" fill="none" stroke="#555" strokeWidth="1.200"><circle cx="9" cy="9" r="7.500" /><path d="M14.500 14.500l4 4" strokeWidth="2.200" /><path d="M6 9h6M9 6v6" strokeWidth="1.800" /></svg>
      </ViewTool>
      <ViewTool label="缩小">
        <svg width="20" height="20" viewBox="0 0 20 20" fill="none" stroke="#555" strokeWidth="1.200"><circle cx="9" cy="9" r="7.500" /><path d="M14.500 14.500l4 4" strokeWidth="2.200" /><path d="M6 9h6" strokeWidth="1.800" /></svg>
      </ViewTool>
      <ViewTool label="幻灯片">
        <svg width="18" height="20" viewBox="0 0 18 20" fill="none" stroke="#555" strokeWidth="1.300"><path d="M0 2h18M1.500 2v12h15V2M6 14l-4 5M12 14l4 5M5 16h8" /><path d="M7.500 5.500v5l3.500-2.500z" fill="#555" stroke="none" /></svg>
      </ViewTool>
      <div className="flex gap-5 px-4">
        <button aria-label="上一张" className="flex size-[30px] items-center justify-center rounded-full border border-[#555]"><ChevronLeft size={22} /></button>
        <button aria-label="下一张" className="flex size-[30px] items-center justify-center rounded-full border border-[#555]"><ChevronRight size={22} /></button>
      </div>
      <ViewTool label="左旋">
        <svg width="20" height="20" viewBox="0 0 20 20" fill="none" stroke="#555" strokeWidth="1.200"><path d="M3 5a8.500 8.500 0 11-1 9" /><path d="M1 1v6h6z" fill="#555" stroke="none" /></svg>
      </ViewTool>
      <ViewTool label="右旋">
        <svg width="20" height="20" viewBox="0 0 20 20" fill="none" stroke="#555" strokeWidth="1.200"><path d="M17 5a8.500 8.500 0 101 9" /><path d="M19 1v6h-6z" fill="#555" stroke="none" /></svg>
      </ViewTool>
      <ViewTool label="删除图片">
        <svg width="16" height="20" viewBox="0 0 16 20" fill="none" stroke="#555" strokeWidth="1.300"><path d="M0 3.500h16M5.500 3.500v-2h5v2M2 3.500v15h12v-15M6 7v8.500M10 7v8.500" /></svg>
      </ViewTool>
      <ViewTool label="编辑">
        <svg width="20" height="20" viewBox="0 0 20 20" fill="none" stroke="#555" strokeWidth="1.300"><path d="M12 1.500H1.500v17h16V8" /><path d="M8 13l1-3 7-8 2 2-7 8z" fill="#555" stroke="none" /></svg>
      </ViewTool>
      <ViewTool label="更多"><CircleChevronUp size={21} strokeWidth={1.500} /></ViewTool>
    </div>
    <div className="flex justify-end pr-[7px]">
      <ViewTool label="收藏"><Heart size={20} strokeWidth={1.200} /></ViewTool>
      <ViewTool label="打开文件夹">
        <svg width="18" height="18" viewBox="0 0 18 18" fill="none" stroke="#555" strokeWidth="1.200"><path d="M1 16.500v-15h6l2 3h8v12zM1 8h16" /></svg>
      </ViewTool>
    </div>
  </footer>
);

const TaskButton = ({ label, className = '', children }: { label: string, className?: string, children: React.ReactNode }) => (
  <button aria-label={label} className={`flex h-full w-[50px] shrink-0 items-center justify-center border-b-2 ${className || 'border-transparent'}`}>{children}</button>
);

const TaskBar = () => (
  <footer className="flex h-10 shrink-0 items-center bg-black text-[12px] text-white">
    <button aria-label="开始菜单" className="flex w-12 shrink-0 justify-center">
      <svg width="16" height="16" viewBox="0 0 16 16" fill="#fff"><path d="M0 2.200L7 1.200v6.300H0zM8 1l8-1v7.500H8zM0 8.500h7v6.300l-7-1zM8 8.500h8V16l-8-1z" /></svg>
    </button>
    <div className="flex h-full w-[345px] shrink-0 items-center bg-[#333] pl-2 pr-3">
      <span className="size-[22px] shrink-0 rounded-full border-3 border-white" />
      <input aria-label="搜索" placeholder="有问题尽管问我" className="ml-1.5 min-w-0 flex-1 bg-transparent text-[14px] outline-none placeholder:text-[#a0a0a0]" />
      <svg width="17" height="18" viewBox="0 0 17 18" fill="none" stroke="#aaa"><rect x="5.500" y=".5" width="5" height="11" rx="1" /><path d="M3 8v5.500h10V8M8 13.500V17M5 17h6" /></svg>
    </div>
    <TaskButton label="风扇">
      <svg width="24" height="24" viewBox="0 0 24 24" fill="#e4e4e4" stroke="#000" strokeWidth="1.200">
        {[0, 60, 120, 180, 240, 300].map(a => <path key={a} transform={`rotate(${a} 12 12)`} d="M12 12C6 11 6 2 12 1c5 0 6 6 2 7-2 1-2 2-2 4z" />)}
      </svg>
    </TaskButton>
    <TaskButton label="旋风">
      <svg width="22" height="22" viewBox="0 0 22 22" fill="none" stroke="#ddd" strokeWidth="1.500"><path d="M19 2C9 1 3 5 3 12c0 9 14 9 15 1 0-6-9-6-9 0 0 3 4 4 5 1M19 2c-5 1-9 2-11 6" /></svg>
    </TaskButton>
    <TaskButton label="Edge">
      <svg width="22" height="22" viewBox="0 0 22 22" fill="none"><path d="M1 10C2 4 6 1 11 1c6 0 9 4 9 9v2H7c0 6 7 6 12 3v4c-7 4-16 2-16-5 0-4 3-7 7-8-2 1-3 3-3 4h7c0-6-8-5-13 0z" fill="#1080dd" /></svg>
    </TaskButton>
    <TaskButton label="文件资源管理器">
      <svg width="23" height="20" viewBox="0 0 23 20"><path d="M0 1h8l2 2h13v15H0z" fill="#f8d76c" /><path d="M2 5h21v13H2z" fill="#ffe89a" /><path d="M4 19v-8h15v8h-4v-4H8v4z" fill="#3aa6e0" /></svg>
    </TaskButton>
    <TaskButton label="应用商店">
      <svg width="22" height="24" viewBox="0 0 22 24" fill="none"><path d="M1 7l20-1v18l-20-3z" fill="#fff" /><path d="M6 7c0-8 9-8 9-1" stroke="#fff" strokeWidth="1.500" /><path d="M6 11l4-1v4H6zM11 10l5-1v5h-5zM6 15h4v4l-4-1zM11 15h5v5l-5-1z" fill="#000" /></svg>
    </TaskButton>
    <TaskButton label="2345看图王" className="border-[#76b9ed] bg-[#333]"><ViewerLogo size={24} /></TaskButton>
    <TaskButton label="电脑管家" className="border-[#76b9ed]">
      <svg width="24" height="24" viewBox="0 0 24 24" fill="none"><rect width="24" height="24" rx="4" fill="#0b93f6" /><path d="M15 6.500c0-3-3-3-3 0V17c0 3-3 3-3 1M12 10.500h5.500c2 0 2 4-1 4M12 14.500H7c-3 0-3-3-1-4" stroke="#fff" strokeWidth="2" strokeLinecap="round" /></svg>
    </TaskButton>
    <TaskButton label="浏览器" className="border-[#76b9ed]">
      <svg width="24" height="24" viewBox="0 0 24 24" fill="none"><circle cx="12" cy="12" r="9.500" fill="#43b52c" stroke="#d7f2cf" strokeWidth="1.500" /><path d="M7 13h10c0-7-10-7-10 0 0 5 6 6 9 3" stroke="#fff" strokeWidth="2.500" /><path d="M2 20C6 14 14 3 21 1c1 3-1 5-2 6" stroke="#7ed957" /></svg>
    </TaskButton>
    <span className="flex-1" />
    <div className="flex flex-col text-center leading-4"><span>51%</span><span>CPU使用</span></div>
    <div className="ml-4 flex items-center gap-2">
      <ChevronUp size={18} strokeWidth={1.500} />
      <svg width="14" height="14" viewBox="0 0 14 14" fill="none" stroke="#ddd"><path d="M1 13A12 12 0 0113 1M4 13a9 9 0 019-9M7 13a6 6 0 016-6M10 13a3 3 0 013-3" /></svg>
      <Volume2 size={17} strokeWidth={1.500} />
      <span className="text-[13px] font-bold">中</span>
      <span className="ml-1"><SogouLogo size={17} /></span>
    </div>
    <time className="ml-5 flex flex-col text-center leading-[18px]"><span>15:03</span><span>2017/3/22</span></time>
    <button aria-label="操作中心" className="ml-[18px] mr-5">
      <svg width="18" height="19" viewBox="0 0 18 19" fill="none" stroke="#fff" strokeWidth="1.200"><path d="M1 2h16v12h-6l-2.500 3L6 14H1z" /></svg>
    </button>
    <span className="mr-1 h-full w-px bg-[#444]" />
  </footer>
);

export default function App() {
  return (
    <div className="flex h-screen flex-col overflow-hidden bg-[#f0f0f0] font-['Noto_Sans_CJK_SC',sans-serif] text-[12px]">
      <ViewerTitle />
      <main className="flex min-h-0 flex-1 flex-col pb-[9px]">
        <Picture />
      </main>
      <ViewerBar />
      <TaskBar />
    </div>
  );
}
